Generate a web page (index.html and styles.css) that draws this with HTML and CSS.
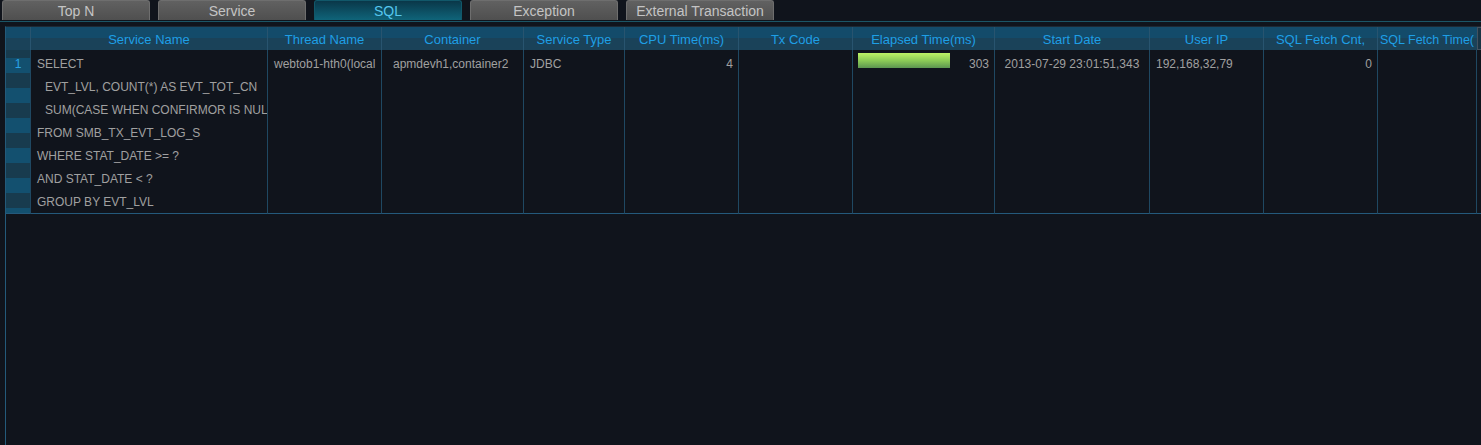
FILE: index.html
```html
<!DOCTYPE html>
<html lang="en">
  <head>
    <meta charset="UTF-8" />
    <meta name="viewport" content="width=device-width, initial-scale=1.0" />
    <title>Transaction Detail - SQL</title>
    <link rel="stylesheet" href="styles.css">
  </head>
  <body>
    <div class="tabs">
      <div class="tab">Top N</div>
      <div class="tab">Service</div>
      <div class="tab active">SQL</div>
      <div class="tab">Exception</div>
      <div class="tab">External Transaction</div>
    </div>

    <div class="panel">
      <div class="grid">
        <!-- header -->
        <div class="th gutter"></div>
        <div class="th">Service Name</div>
        <div class="th">Thread Name</div>
        <div class="th">Container</div>
        <div class="th">Service Type</div>
        <div class="th">CPU Time(ms)</div>
        <div class="th">Tx Code</div>
        <div class="th">Elapsed Time(ms)</div>
        <div class="th">Start Date</div>
        <div class="th">User IP</div>
        <div class="th">SQL Fetch Cnt,</div>
        <div class="th left">SQL Fetch Time(</div>
        <div class="th stub"></div>

        <!-- row 1 -->
        <div class="td gutter"><div class="num">1</div></div>
        <div class="td sql">
          <div>SELECT</div>
          <div class="indent">EVT_LVL, COUNT(*) AS EVT_TOT_CN</div>
          <div class="indent">SUM(CASE WHEN CONFIRMOR IS NUL</div>
          <div>FROM SMB_TX_EVT_LOG_S</div>
          <div>WHERE STAT_DATE &gt;= ?</div>
          <div>AND STAT_DATE &lt; ?</div>
          <div>GROUP BY EVT_LVL</div>
        </div>
        <div class="td">webtob1-hth0(local</div>
        <div class="td container">apmdevh1,container2</div>
        <div class="td">JDBC</div>
        <div class="td right">4</div>
        <div class="td"></div>
        <div class="td elapsed">
          <div class="bar" style="width: 92px"></div>
          <span>303</span>
        </div>
        <div class="td center">2013-07-29 23:01:51,343</div>
        <div class="td">192,168,32,79</div>
        <div class="td right">0</div>
        <div class="td"></div>
        <div class="td stub"></div>
      </div>
    </div>
  </body>
</html>
```

FILE: styles.css
```css
* {
  box-sizing: border-box;
  font-family: 'Liberation Sans', Arial, sans-serif;
}

html,
body {
  margin: 0;
  height: 100%;
  overflow: hidden;
}

body {
  background-color: #10141c;
  color: #a0a0a0;
}

/* tabs */
.tabs {
  display: flex;
  gap: 8px;
  padding-left: 2px;
  height: 20px;
  margin-bottom: 1px;
}

.tab {
  width: 148px;
  height: 20px;
  border: 1px solid #6e6e6e;
  border-bottom: none;
  border-radius: 3px 3px 0 0;
  background: linear-gradient(to bottom, #616161, #4f4f4f);
  color: #c4c4c4;
  font-size: 14px;
  line-height: 20px;
  text-align: center;
}

.tab.active {
  border-color: #11586a;
  background: linear-gradient(to bottom, #0a3749, #0f6479);
  color: #55c6ee;
}

/* grid panel */
.panel {
  height: calc(100% - 21px);
  border-top: 1px solid #1b5566;
  padding-top: 4px;
}

.grid {
  display: grid;
  grid-template-columns: 25px 237px 114px 142px 101px 114px 114px 142px 155px 114px 114px 99px 6px;
  margin-left: 5px;
  height: 100%;
  align-content: start;
  border-left: 1px solid #245a7a;
  border-top: 1px solid #1d2934;
  width: max-content;
}

.th {
  height: 23px;
  padding-top: 2px;
  line-height: 22px;
  font-size: 13px;
  color: #1e9fe6;
  text-align: center;
  white-space: nowrap;
  overflow: hidden;
  border-right: 1px solid #28546f;
  background: linear-gradient(to bottom, #134b6a 0, #134b6a 11px, #1a4259 11px, #1a4259 100%);
}

.th.left {
  text-align: left;
  padding-left: 2px;
  font-size: 12.5px;
  border-right: none;
}

.th.stub {
  border: 1px solid #44525f;
  background: #1a3444;
}

.td {
  height: 164px;
  padding-top: 3px;
  line-height: 23px;
  font-size: 12px;
  white-space: nowrap;
  overflow: hidden;
  padding-left: 6px;
  padding-right: 5px;
  border-right: 1px solid #1f4862;
  border-bottom: 1px solid #24597b;
}

.td.stub {
  border-right: none;
}

.gutter {
  padding: 0;
}

.td.gutter {
  padding-top: 3px;
  background: repeating-linear-gradient(to bottom, #183b4e 0, #183b4e 8px, #13506f 8px, #13506f 23px, #183b4e 23px, #183b4e 30px);
}

.num {
  text-align: center;
  color: #2aa3e6;
}

.sql .indent {
  padding-left: 8px;
}

.container {
  padding-left: 11px;
}

.right {
  text-align: right;
}

.center {
  text-align: center;
  padding-left: 0;
  padding-right: 0;
}

.elapsed {
  display: flex;
  align-items: flex-start;
  justify-content: space-between;
  padding-left: 5px;
}

.bar {
  height: 15px;
  background: linear-gradient(to bottom, #bdf466, #8ccc57 50%, #5c9650);
}
```
